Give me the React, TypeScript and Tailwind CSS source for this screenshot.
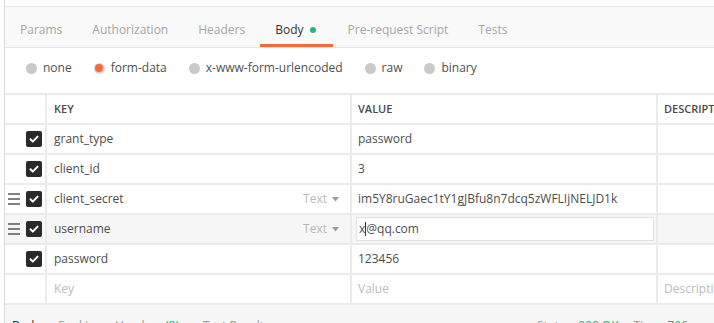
import React from "react";

type Row = {
  key: string;
  value: string;
  typed?: boolean;
  active?: boolean;
};

const rows: Row[] = [
  { key: "grant_type", value: "password" },
  { key: "client_id", value: "3" },
  { key: "client_secret", value: "im5Y8ruGaec1tY1gJBfu8n7dcq5zWFLIjNELJD1k", typed: true },
  { key: "username", value: "x@qq.com", typed: true, active: true },
  { key: "password", value: "123456" },
];

const tabs = ["Params", "Authorization", "Headers", "Body", "Pre-request Script", "Tests"];
const bodyTypes = ["none", "form-data", "x-www-form-urlencoded", "raw", "binary"];

function Checkbox() {
  return (
    <div className="w-[16px] h-[16px] rounded-[2px] bg-[#2a2a2a] flex items-center justify-center">
      <svg width="12" height="12" viewBox="0 0 12 12" fill="none">
        <path d="M2.5 6.3l2.3 2.3L9.6 3.6" stroke="#fff" strokeWidth="2" strokeLinecap="round" strokeLinejoin="round" />
      </svg>
    </div>
  );
}

function Handle() {
  return (
    <div className="flex flex-col gap-[3.5px] w-[12px]">
      <span className="h-[1.5px] bg-[#808080]" />
      <span className="h-[1.5px] bg-[#808080]" />
      <span className="h-[1.5px] bg-[#808080]" />
    </div>
  );
}

function TypeSelect() {
  return (
    <div className="flex items-center gap-[5px] text-[#b8b8b8] pr-[11px]">
      <span>Text</span>
      <svg width="7" height="5" viewBox="0 0 7 5">
        <path d="M0 0h7L3.5 4.5z" fill="#9a9a9a" />
      </svg>
    </div>
  );
}

export default function App() {
  return (
    <div
      className="w-[714px] h-[323px] overflow-hidden bg-white flex text-[12px] text-[#4d4d4d]"
      style={{ fontFamily: '"Open Sans", "Liberation Sans", sans-serif' }}
    >
      <div className="w-[4px] shrink-0 bg-white" />
      <div className="flex-1 flex flex-col border-l border-[#dcdcdc] bg-[#f6f6f6] min-w-0">
        {/* top strip */}
        <div className="h-[7px] shrink-0 bg-white border-b border-[#e6e6e6]" />

        {/* tabs */}
        <div className="h-[41px] shrink-0 bg-[#f9f9f9] border-b border-[#e4e4e4] flex">
          {tabs.map((t) => {
            const active = t === "Body";
            return (
              <div
                key={t}
                className={`relative h-full flex items-center pt-[5px] ${active ? "pl-[15px] pr-[17px] text-[#333]" : "px-[15px] text-[#a6a6a6]"}`}
              >
                <span className="whitespace-nowrap">{t}</span>
                {active && <span className="ml-[6px] w-[6px] h-[6px] rounded-full bg-[#26b47f]" />}
                {active && <span className="absolute left-0 right-0 bottom-0 h-[3px] bg-[#f26b3a]" />}
              </div>
            );
          })}
        </div>

        {/* body types */}
        <div className="bg-white h-[45px] shrink-0 pb-[5px] flex items-center pl-[21px] gap-[22px]">
          {bodyTypes.map((b) => {
            const on = b === "form-data";
            return (
              <div key={b} className="flex items-center gap-[6px] text-[#505050]">
                {on ? (
                  <span className="w-[11px] h-[11px] rounded-full bg-[#e2d3cb] flex items-center justify-center">
                    <span className="w-[8px] h-[8px] rounded-full bg-[#f26b3a]" />
                  </span>
                ) : (
                  <span className="w-[11px] h-[11px] rounded-full bg-[#c9c9c9]" />
                )}
                <span className="whitespace-nowrap">{b}</span>
              </div>
            );
          })}
        </div>

        {/* table */}
        <div className="grid shrink-0 grid-cols-[40px_303px_304px_1fr] auto-rows-[28px] gap-[2px] py-[2px] bg-[#ebebeb]">
          <div className="bg-white" />
          <div className="bg-white flex items-center px-[7px] text-[11px] font-semibold text-[#4a4a4a]">KEY</div>
          <div className="bg-white flex items-center px-[6px] text-[11px] font-semibold text-[#4a4a4a]">VALUE</div>
          <div className="bg-white flex items-center px-[6px] text-[11px] font-semibold text-[#4a4a4a] overflow-hidden whitespace-nowrap">
            DESCRIPTION
          </div>

          {rows.map((r) => {
            const bg = r.active ? "bg-[#f6f6f6]" : "bg-white";
            return (
              <React.Fragment key={r.key}>
                <div className={`${bg} flex items-center pl-[3px] gap-[6px]`}>
                  <div className="w-[12px]">{r.typed && <Handle />}</div>
                  <Checkbox />
                </div>
                <div className={`${bg} flex items-center justify-between pl-[7px]`}>
                  <span>{r.key}</span>
                  {r.typed && <TypeSelect />}
                </div>
                {r.active ? (
                  <div className={`${bg} flex items-center pl-[4px] pr-[2px]`}>
                    <div className="flex-1 h-[24px] bg-white border border-[#e2e2e2] flex items-center px-[2px]">
                      <span>x</span>
                      <span className="w-[1px] h-[14px] bg-[#333]" />
                      <span>@qq.com</span>
                    </div>
                  </div>
                ) : (
                  <div className={`${bg} flex items-center px-[6px] whitespace-nowrap`}>{r.value}</div>
                )}
                <div className={bg} />
              </React.Fragment>
            );
          })}

          <div className="bg-white" />
          <div className="bg-white flex items-center pl-[7px] text-[#bcbcbc]">Key</div>
          <div className="bg-white flex items-center px-[6px] text-[#bcbcbc]">Value</div>
          <div className="bg-white flex items-center px-[6px] text-[#bcbcbc] overflow-hidden whitespace-nowrap">Description</div>
        </div>

        {/* response bar */}
        <div className="mt-[13px] shrink-0 flex leading-[16px] whitespace-nowrap">
          <div className="w-[532px] shrink-0 flex pl-[7px]">
            <span className="w-[45px] text-[#333]">Body</span>
            <span className="w-[58px] text-[#9a9a9a]">Cookies</span>
            <span className="w-[88px] text-[#9a9a9a]">
              Headers <span className="text-[#26b47f]">(8)</span>
            </span>
            <span className="text-[#9a9a9a]">Test Results</span>
          </div>
          <div className="flex shrink-0 gap-[15px] text-[#9a9a9a]">
            <span>
              Status: <span className="text-[#26b47f]">200 OK</span>
            </span>
            <span>
              Time: <span className="text-[#26b47f]">706 ms</span>
            </span>
            <span>
              Size: <span className="text-[#26b47f]">1.17 KB</span>
            </span>
          </div>
        </div>
      </div>
    </div>
  );
}
